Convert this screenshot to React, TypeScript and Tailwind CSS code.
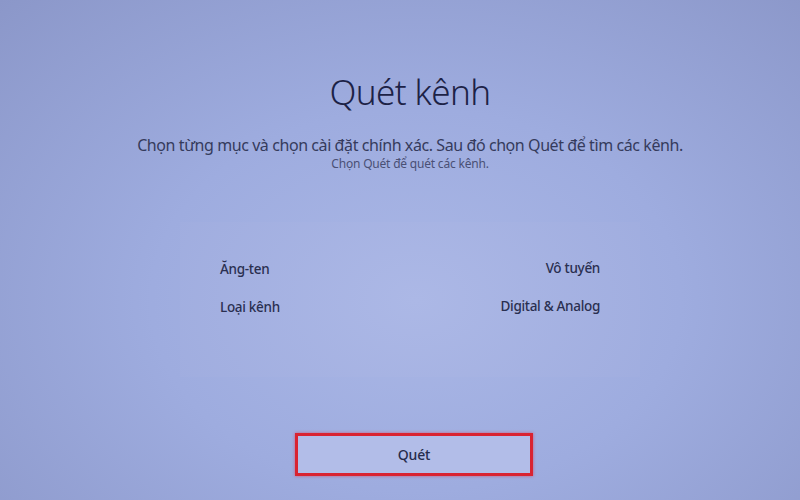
export default function App() {
  return (
    <div
      className="relative h-[500px] w-[800px] overflow-hidden bg-[radial-gradient(ellipse_at_52%_60%,#aab7e6_0%,#9eacdf_45%,#8b97c9_100%)] pl-[20px] text-[#1f2547]"
      style={{ fontFamily: '"Noto Sans", "Open Sans", sans-serif' }}
    >
      <div className="flex h-full flex-col items-center">
        <h1 className="mt-[66px] text-[35px] font-light leading-[52px] tracking-[-0.6px] text-[#1c2246]">
          Quét kênh
        </h1>
        <p className="mt-[16px] text-[16px] leading-[22px] tracking-[-0.42px] text-[#353b5c]">
          Chọn từng mục và chọn cài đặt chính xác. Sau đó chọn Quét để tìm các kênh.
        </p>
        <p className="text-[12px] leading-[16px] tracking-[-0.2px] text-[#4a5075]">
          Chọn Quét để quét các kênh.
        </p>

        <div className="mt-[50px] flex w-[460px] flex-col bg-white/[0.025] px-[40px] pt-[35px] pb-[60px]">
          <div className="flex items-center justify-between text-[13.5px] font-medium leading-[20px] tracking-[-0.3px] text-[#2a2f50]">
            <span className="pt-[2px]">Ăng-ten</span>
            <span>Vô tuyến</span>
          </div>
          <div className="mt-[16px] flex items-center justify-between text-[13.5px] font-medium leading-[20px] tracking-[-0.3px] text-[#2a2f50]">
            <span className="pt-[2px]">Loại kênh</span>
            <span>Digital &amp; Analog</span>
          </div>
        </div>

        <div className="ml-[8px] mt-[56px] flex h-[43px] w-[238px] items-center justify-center border-[3px] border-[#d92331] bg-[#b2bde8] shadow-[0_0_3px_rgba(230,40,60,0.6)]">
          <span className="text-[14px] font-medium tracking-[-0.2px] text-[#262b4c]">Quét</span>
        </div>
      </div>
    </div>
  );
}
